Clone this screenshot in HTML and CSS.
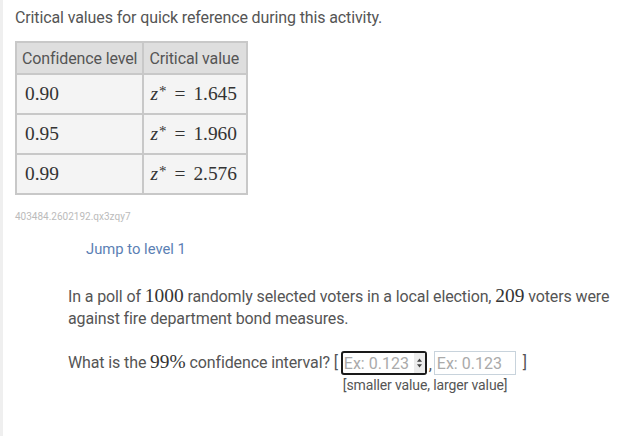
FILE: index.html
```html
<!DOCTYPE html>
<html>
<head>
<meta charset="utf-8">
<link rel="stylesheet" href="styles.css">
</head>
<body>
<div class="page">
  <p class="intro">Critical values for quick reference during this activity.</p>
  <table class="crit">
    <thead>
      <tr><th class="c1">Confidence level</th><th class="c2">Critical value</th></tr>
    </thead>
    <tbody>
      <tr><td class="c1"><span class="m">0.90</span></td><td class="c2"><span class="m"><i>z</i><sup>*</sup><span class="eq">=</span>1.645</span></td></tr>
      <tr><td class="c1"><span class="m">0.95</span></td><td class="c2"><span class="m"><i>z</i><sup>*</sup><span class="eq">=</span>1.960</span></td></tr>
      <tr><td class="c1"><span class="m">0.99</span></td><td class="c2"><span class="m"><i>z</i><sup>*</sup><span class="eq">=</span>2.576</span></td></tr>
    </tbody>
  </table>
  <div class="code">403484.2602192.qx3zqy7</div>
  <div class="level"><a class="jump" href="#">Jump to level 1</a></div>
  <div class="question">
    <p class="stem">In a poll of <span class="m">1000</span> randomly selected voters in a local election, <span class="m">209</span> voters were against fire department bond measures.</p>
    <div class="ask">
      <span class="ask-text">What is the <span class="m">99%</span> confidence interval? [</span>
      <div class="answer">
        <div class="inputs">
          <span class="box focused"><input class="field" type="text" placeholder="Ex: 0.123"><span class="spin"><svg width="7" height="12" viewBox="0 0 7 12"><path d="M3.5 1.5 L6 4.8 H1 Z" fill="#444"/><path d="M3.5 10.5 L6 7.2 H1 Z" fill="#444"/></svg></span></span>
          <span class="sep">,</span>
          <span class="box plain"><input class="field" type="text" placeholder="Ex: 0.123"></span>
          <span class="close">]</span>
        </div>
        <div class="hint">[smaller value, larger value]</div>
      </div>
    </div>
  </div>
</div>
</body>
</html>
```
FILE: styles.css
```css
html, body {
  margin: 0;
  padding: 0;
  background: #fff;
}
body {
  font-family: Roboto, "Liberation Sans", sans-serif;
  color: #555;
  font-size: 16px;
  letter-spacing: -0.12px;
}
.page {
  border-left: 3px solid #efefef;
  padding: 7px 0 0 12px;
  min-height: 436px;
  box-sizing: border-box;
}
.intro {
  margin: 0;
  line-height: 22px;
}
.m {
  font-family: "Liberation Serif", serif;
  font-size: 19.4px;
  line-height: 1;
  letter-spacing: 0;
  color: #333;
}
.m i { font-style: italic; }
.m sup {
  font-size: 15px;
  vertical-align: 0;
  position: relative;
  top: -4px;
  margin-left: 1px;
}
.m .eq { margin: 0 8px 0 8px; }
.crit {
  margin-top: 12px;
  border-collapse: collapse;
  border: 2px solid #c8c8c8;
}
.crit th, .crit td {
  border: 2px solid #c8c8c8;
  text-align: left;
  padding: 0 5px;
  white-space: nowrap;
}
.crit th {
  background: #dedede;
  font-weight: normal;
  height: 29px;
  line-height: 20px;
  padding-top: 1px;
  color: #555;
}
.crit td {
  background: #f4f4f4;
  height: 38px;
  padding-left: 8px;
}
.crit th.c1 { width: 108px; }
.crit th.c2 { width: 92px; }
.crit td.c2 { padding-left: 6px; }
.code {
  margin-top: 15px;
  font-size: 10px;
  color: #bbb;
  line-height: 14px;
  letter-spacing: 0;
}
.level {
  margin-top: 15px;
  padding-left: 71px;
  line-height: 20px;
}
.jump {
  font-size: 14.8px;
  letter-spacing: 0;
  color: #5b7fb4;
  text-decoration: none;
}
.question {
  padding-left: 53px;
  padding-right: 20px;
}
.stem {
  margin: 27px 0 0 0;
  line-height: 22px;
}
.ask {
  display: flex;
  align-items: flex-start;
  margin-top: 21px;
}
.ask-text {
  line-height: 24px;
  white-space: nowrap;
}
.answer {
  display: flex;
  flex-direction: column;
  margin-left: 3px;
}
.inputs {
  display: flex;
  align-items: center;
  height: 24px;
}
.box {
  display: flex;
  align-items: stretch;
  height: 24px;
  box-sizing: border-box;
}
.box.focused {
  border: 2px solid #1a1a1a;
  border-radius: 3px;
  width: 86px;
}
.box.plain {
  border: 1px solid #c8d3dc;
  width: 82px;
}
.field {
  border: none;
  outline: none;
  padding: 0 0 0 1px;
  margin: 0;
  font-family: Roboto, "Liberation Sans", sans-serif;
  font-size: 16px;
  color: #333;
  background: transparent;
  width: 100%;
  min-width: 0;
}
.field::placeholder { color: #aaa; }
.plain .field { padding-left: 2px; }
.spin {
  flex: none;
  width: 11px;
  background: #ececec;
  display: flex;
  align-items: center;
  justify-content: center;
}
.sep {
  width: 7px;
  text-align: center;
  line-height: 24px;
  padding-top: 4px;
}
.close {
  margin-left: 7px;
  line-height: 24px;
}
.hint {
  font-size: 14px;
  line-height: 18px;
  margin-left: 2px;
  margin-top: 1px;
}
```
